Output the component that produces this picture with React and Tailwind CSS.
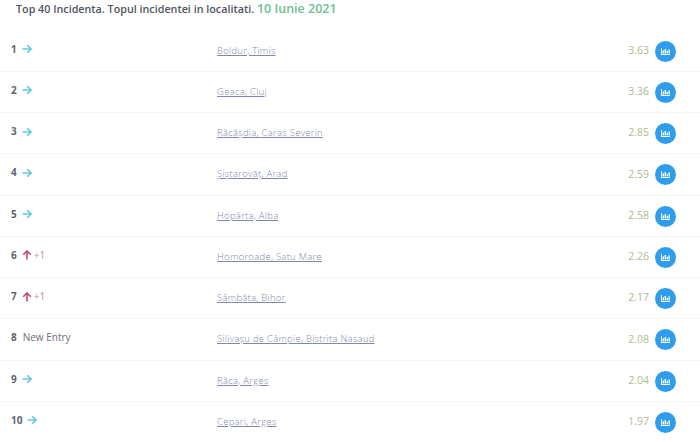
import React from 'react';

const rows = [
  { rank: 1, trend: 'same', place: 'Boldur, Timis', value: '3.63' },
  { rank: 2, trend: 'same', place: 'Geaca, Cluj', value: '3.36' },
  { rank: 3, trend: 'same', place: 'Răcășdia, Caras Severin', value: '2.85' },
  { rank: 4, trend: 'same', place: 'Șiștarovăț, Arad', value: '2.59' },
  { rank: 5, trend: 'same', place: 'Hopârta, Alba', value: '2.58' },
  { rank: 6, trend: 'up', place: 'Homoroade, Satu Mare', value: '2.26' },
  { rank: 7, trend: 'up', place: 'Sâmbăta, Bihor', value: '2.17' },
  { rank: 8, trend: 'new', place: 'Silivașu de Câmpie, Bistrita Nasaud', value: '2.08' },
  { rank: 9, trend: 'same', place: 'Răca, Arges', value: '2.04' },
  { rank: 10, trend: 'same', place: 'Cepari, Arges', value: '1.97' },
];

function ArrowRight() {
  return (
    <svg width="10" height="10" viewBox="0 0 10 10" fill="none" stroke="#62cbe0" strokeWidth="1.6">
      <path d="M0.5 5H9M5.2 1.2L9 5L5.2 8.8" />
    </svg>
  );
}

function ArrowUp() {
  return (
    <svg width="10" height="10" viewBox="0 0 10 10" fill="none" stroke="#c9486f" strokeWidth="1.6">
      <path d="M5 9.5V1M1.2 4.8L5 1L8.8 4.8" />
    </svg>
  );
}

function ChartIcon() {
  return (
    <svg width="9" height="7" viewBox="0 0 9 7" fill="#ffffff">
      <path d="M0 0H0.9V6H9V7H0Z" />
      <rect x="1.6" y="2.4" width="1.4" height="3" />
      <rect x="3.6" y="1" width="1.4" height="4.4" />
      <rect x="5.6" y="2.8" width="1.4" height="2.6" />
      <rect x="7.5" y="1.4" width="1.4" height="4" />
    </svg>
  );
}

function Trend({ trend }) {
  if (trend === 'same') return <ArrowRight />;
  if (trend === 'new') return <span className="text-[10px] text-[#6b6f76] ml-[1px]">New Entry</span>;
  return (
    <span className="flex items-center gap-[2px]">
      <ArrowUp />
      <span className="text-[10px] text-[#bd93a2]">+1</span>
    </span>
  );
}

export default function App() {
  return (
    <div className="w-[700px] h-[442px] overflow-hidden bg-white font-['Open_Sans',sans-serif]">
      <div className="h-[30.5px] pl-4 flex items-start">
        <h2 className="text-[10.75px] leading-[17px] font-semibold text-[#50555f]">
          Top 40 Incidenta. Topul incidentei in localitati.{' '}
          <span className="text-[12.5px] text-[#6dbf8b]">10 Iunie 2021</span>
        </h2>
      </div>
      {rows.map((row) => (
        <div key={row.rank} className="h-[41.25px] flex items-center border-b border-[#f4f4f4] pl-[11px] pr-6">
          <div className="w-[206px] flex items-center gap-[5px] mb-[3px]">
            <span className="text-[10px] font-bold text-[#5f646e]">{row.rank}</span>
            <Trend trend={row.trend} />
          </div>
          <a href="#" className="flex-1 text-[9.5px] font-light tracking-[0.26px] text-[#8288ac] underline">{row.place}</a>
          <span className="text-[10.5px] text-[#aebd92] mr-[6px]">{row.value}</span>
          <button className="w-[21px] h-[21px] rounded-full bg-[#2f9ded] flex items-center justify-center mt-[1px]">
            <ChartIcon />
          </button>
        </div>
      ))}
    </div>
  );
}
